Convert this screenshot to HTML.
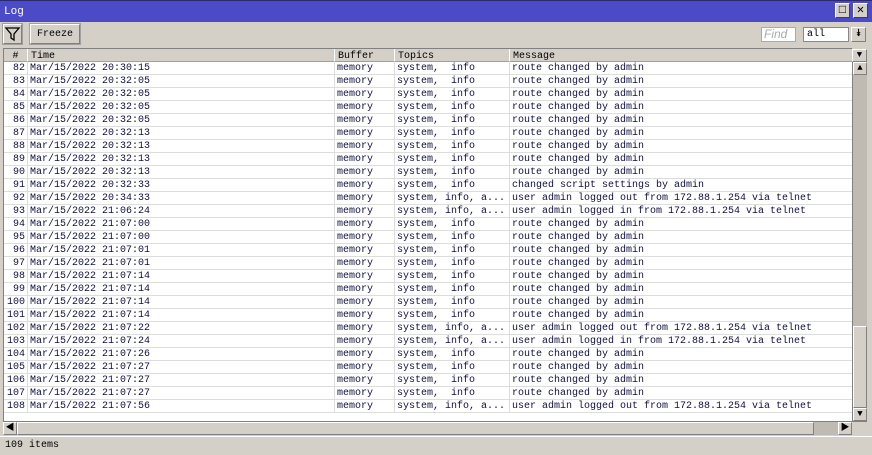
<!DOCTYPE html>
<html><head><meta charset="utf-8"><style>
*{margin:0;padding:0;box-sizing:border-box}
body{width:872px;height:455px;background:#d4d0c8;position:relative;overflow:hidden;font-family:"Liberation Mono","Noto Sans CJK SC",monospace;font-size:10px;color:#101040}
.abs{position:absolute}
.title{left:0;top:0;width:872px;height:22px;background:#4b4bc8;border-top:1px solid #2a2a70;color:#fff;font-size:11px;line-height:23px;padding-left:4px}
.wb{top:3px;width:15px;height:15px;background:#d4d0c8;border:1px solid #fff;border-right-color:#404040;border-bottom-color:#404040;color:#000;font-size:12px;line-height:13px;text-align:center;font-weight:bold}
.btn{background:#d4d0c8;border:1px solid #fff;border-right-color:#808080;border-bottom-color:#808080;outline:1px solid #a0a0a0}
.grid{left:3px;top:48px;width:849px;height:373px;background:#fff;border-left:1px solid #808080;border-top:1px solid #808080}
.hdr{position:absolute;top:0;height:13px;background:#d4d0c8;border-right:1px solid #fff;border-bottom:1px solid #a0a0a0;line-height:15px;padding-left:3px;color:#000}
.row{position:absolute;left:0;width:849px;height:13px;border-bottom:1px solid #ddd;line-height:14px}
.c{position:absolute;top:0;height:12px;border-right:1px solid #ddd;padding-left:2px;white-space:nowrap;overflow:hidden}
.sb{background:#d4d0c8;border:1px solid #fff;border-right-color:#808080;border-bottom-color:#808080;font-size:9px;line-height:11px;text-align:center;color:#000}
</style></head><body>
<div class="abs title">Log</div>
<div class="abs wb" style="left:835px">□</div>
<div class="abs wb" style="left:853px">✕</div>
<div class="abs btn" style="left:3px;top:24px;width:19px;height:20px">
<svg width="17" height="18" viewBox="0 0 17 18"><path d="M2 3H15L10 9V15L7 13V9Z" fill="none" stroke="#000" stroke-width="1.3"/></svg></div>
<div class="abs btn" style="left:30px;top:24px;width:50px;height:20px;color:#000;line-height:19px;text-align:center">Freeze</div>
<div class="abs" style="left:761px;top:27px;width:35px;height:15px;background:#fff;border:1px solid #aaa;color:#aaa;font-family:'Liberation Sans',sans-serif;font-style:italic;font-size:12px;line-height:13px;padding-left:2px">Find</div>
<div class="abs" style="left:803px;top:27px;width:46px;height:15px;background:#fff;border:1px solid #888;color:#000;line-height:14px;padding-left:3px">all</div>
<div class="abs sb" style="left:851px;top:27px;width:15px;height:15px;font-size:10px;line-height:13px">⯯</div>
<div class="abs grid" id="g">
<div class="hdr" style="left:0;width:24px;text-align:center;padding:0">#</div>
<div class="hdr" style="left:24px;width:307px">Time</div>
<div class="hdr" style="left:331px;width:60px">Buffer</div>
<div class="hdr" style="left:391px;width:115px">Topics</div>
<div class="hdr" style="left:506px;width:343px">Message</div>
</div>
<div class="abs sb" style="left:852px;top:49px;width:15px;height:13px">▼</div>
<div class="abs" style="left:852px;top:62px;width:15px;height:359px;background:#bfbbb3;border-left:1px solid #808080"></div>
<div class="abs sb" style="left:853px;top:62px;width:14px;height:13px">▲</div>
<div class="abs sb" style="left:853px;top:326px;width:14px;height:82px"></div>
<div class="abs sb" style="left:853px;top:408px;width:14px;height:13px">▼</div>
<div class="abs" style="left:3px;top:421px;width:864px;height:15px;background:#d4d0c8;border-top:1px solid #808080"></div>
<div class="abs sb" style="left:3px;top:422px;width:14px;height:13px">◀</div>
<div class="abs" style="left:17px;top:422px;width:797px;height:13px;border:1px solid #fff;border-right-color:#808080;border-bottom-color:#808080"></div>
<div class="abs" style="left:814px;top:422px;width:24px;height:13px;background:#bfbbb3"></div>
<div class="abs sb" style="left:838px;top:422px;width:14px;height:13px">▶</div>
<div class="abs" style="left:0;top:436px;width:872px;height:19px;border-top:1px solid #fff;color:#000;line-height:18px;padding-left:5px">109 items</div>
<script>
var d=[["20:30:15",0],["20:32:05",0],["20:32:05",0],["20:32:05",0],["20:32:05",0],["20:32:13",0],["20:32:13",0],["20:32:13",0],["20:32:13",0],["20:32:33",3],["20:34:33",1],["21:06:24",2],["21:07:00",0],["21:07:00",0],["21:07:01",0],["21:07:01",0],["21:07:14",0],["21:07:14",0],["21:07:14",0],["21:07:14",0],["21:07:22",1],["21:07:24",2],["21:07:26",0],["21:07:27",0],["21:07:27",0],["21:07:27",0],["21:07:56",1]];
var m=["route changed by admin","user admin logged out from 172.88.1.254 via telnet","user admin logged in from 172.88.1.254 via telnet","changed script settings by admin"];
var g=document.getElementById('g'),h='';
d.forEach(function(r,i){var t=(r[1]==1||r[1]==2)?"system,&nbsp;info,&nbsp;a...":"system,&nbsp;&nbsp;info";
h+='<div class="row" style="top:'+(13+i*13)+'px"><div class="c" style="left:0;width:24px;text-align:right;padding-right:2px">'+(82+i)+'</div><div class="c" style="left:24px;width:307px">Mar/15/2022 '+r[0]+'</div><div class="c" style="left:331px;width:60px">memory</div><div class="c" style="left:391px;width:115px">'+t+'</div><div class="c" style="left:506px;width:343px;border:0">'+m[r[1]]+'</div></div>';});
g.insertAdjacentHTML('beforeend',h);
</script>
</body></html>
